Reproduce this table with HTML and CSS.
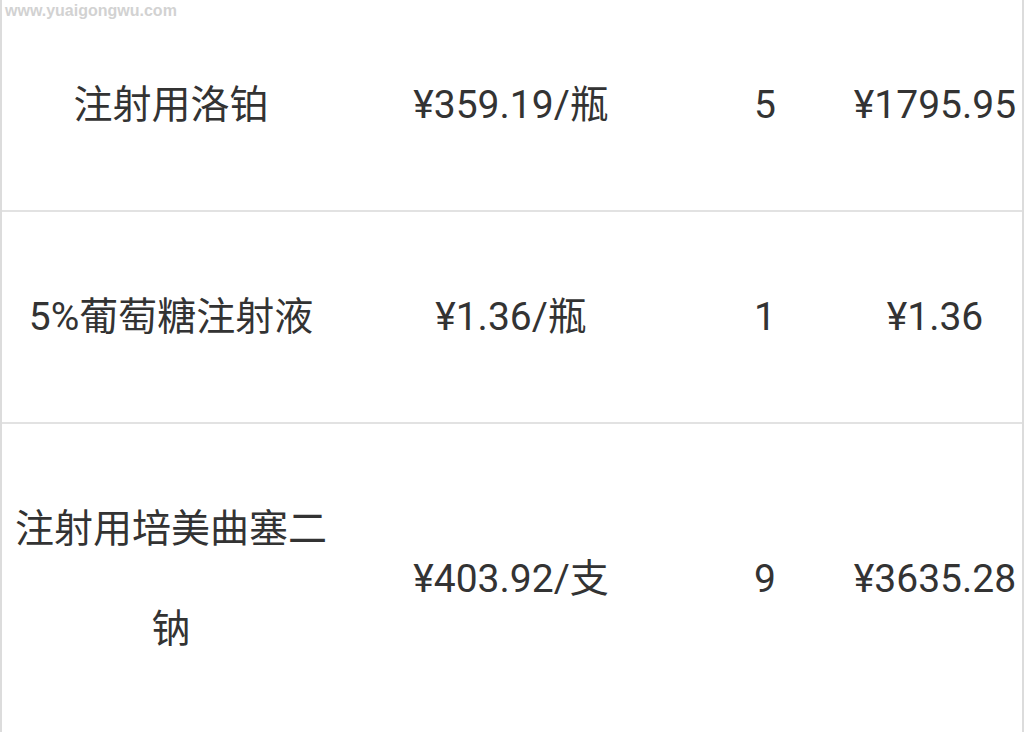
FILE: index.html
```html
<!DOCTYPE html>
<html lang="zh-CN">
<head>
<meta charset="utf-8">
<title>药品费用</title>
<link rel="stylesheet" href="styles.css">
</head>
<body>
<div class="watermark">www.yuaigongwu.com</div>
<table class="drug-table">
  <colgroup>
    <col class="c-name">
    <col class="c-price">
    <col class="c-qty">
    <col class="c-total">
  </colgroup>
  <tbody>
    <tr>
      <td class="name">注射用洛铂</td>
      <td class="num">¥359.19/瓶</td>
      <td class="num">5</td>
      <td class="num">¥1795.95</td>
    </tr>
    <tr>
      <td class="name">5%葡萄糖注射液</td>
      <td class="num">¥1.36/瓶</td>
      <td class="num">1</td>
      <td class="num">¥1.36</td>
    </tr>
    <tr>
      <td class="name">注射用培美曲塞二钠</td>
      <td class="num">¥403.92/支</td>
      <td class="num">9</td>
      <td class="num">¥3635.28</td>
    </tr>
  </tbody>
</table>
</body>
</html>
```

FILE: styles.css
```css
html, body {
  margin: 0;
  padding: 0;
  background: #ffffff;
  overflow: hidden;
}

body {
  font-family: Roboto, "Noto Sans CJK SC", sans-serif;
  color: #333333;
}

.watermark {
  position: absolute;
  left: 5px;
  top: 2px;
  font-family: "Liberation Sans", Arial, sans-serif;
  font-weight: bold;
  font-size: 16px;
  line-height: 18px;
  color: #d2d2d2;
  letter-spacing: 0;
}

.drug-table {
  margin-left: 0;
  width: 1024px;
  table-layout: fixed;
  border-spacing: 0;
  border-collapse: separate;
  border-left: 2px solid #dcdcdc;
  border-right: 2px solid #dcdcdc;
  box-sizing: border-box;
}

.c-name { width: 338px; }
.c-price { width: 342px; }
.c-qty { width: 166px; }
.c-total { width: 174px; }

.drug-table td {
  padding: 55px 0;
  font-size: 39px;
  line-height: 100px;
  text-align: center;
  vertical-align: middle;
  border-bottom: 2px solid #e2e2e2;
}

.drug-table td.num {
  white-space: nowrap;
}
```
